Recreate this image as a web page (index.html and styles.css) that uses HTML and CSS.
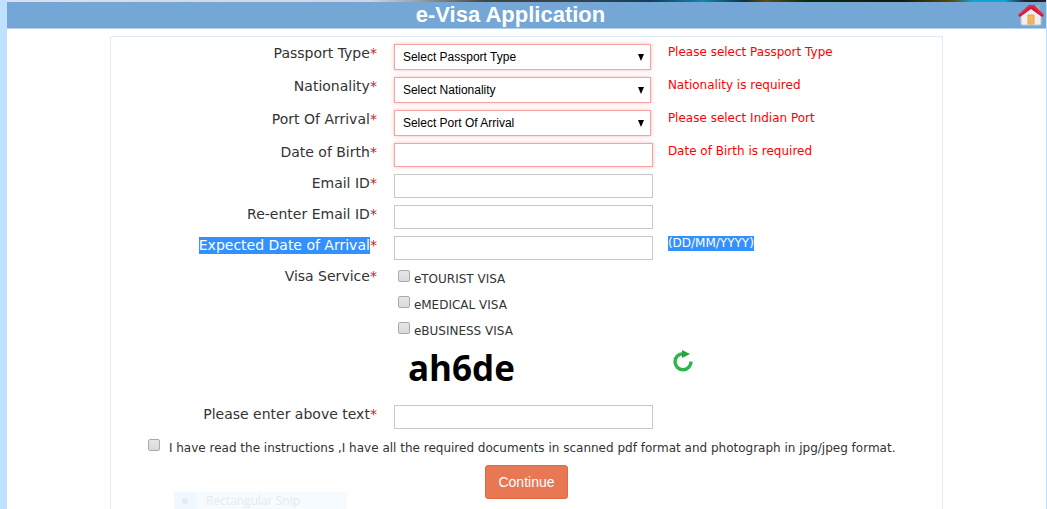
FILE: index.html
```html
<!DOCTYPE html>
<html lang="en">
<head>
<meta charset="utf-8">
<title>e-Visa Application</title>
<link rel="stylesheet" href="styles.css">
</head>
<body>
<div class="page">
  <div class="banner"></div>
  <header class="titlebar">
    <h1>e-Visa Application</h1>
    <a class="home" href="#" aria-label="Home">
      <svg width="26" height="22" viewBox="0 0 26 22">
        <path d="M18 1h4v7l-4-3z" fill="#aaa8b4"/>
        <path d="M3 10L13 3l10 7v10q0 1-1 1H4q-1 0-1-1z" fill="#f0eef0" stroke="#c9c4c6"/>
        <path d="M10 11h6v9h-6z" fill="#f2b75c" stroke="#e5a54e"/>
        <path d="M0 11L11 1h5l10 10-2 2-11-8-11 8z" fill="#d5173b"/>
        <path d="M2 10L12 2h3l8 8" fill="none" stroke="#e8405c"/>
      </svg>
    </a>
  </header>
  <form class="panel">
    <div class="row">
      <label for="ptype">Passport Type<b>*</b></label>
      <select id="ptype" class="invalid"><option>Select Passport Type</option></select>
      <span class="error">Please select Passport Type</span>
    </div>
    <div class="row">
      <label for="nation">Nationality<b>*</b></label>
      <select id="nation" class="invalid"><option>Select Nationality</option></select>
      <span class="error">Nationality is required</span>
    </div>
    <div class="row">
      <label for="port">Port Of Arrival<b>*</b></label>
      <select id="port" class="invalid"><option>Select Port Of Arrival</option></select>
      <span class="error">Please select Indian Port</span>
    </div>
    <div class="row">
      <label for="dob">Date of Birth<b>*</b></label>
      <input type="text" id="dob" class="invalid">
      <span class="error">Date of Birth is required</span>
    </div>
    <div class="row">
      <label for="email">Email ID<b>*</b></label>
      <input type="text" id="email">
    </div>
    <div class="row">
      <label for="email2">Re-enter Email ID<b>*</b></label>
      <input type="text" id="email2">
    </div>
    <div class="row">
      <label for="arrival"><span class="selected">Expected Date of Arrival</span><b>*</b></label>
      <input type="text" id="arrival">
      <span class="hint"><span class="selected">(DD/MM/YYYY)</span></span>
    </div>
    <div class="row" role="group" aria-labelledby="service">
      <span class="label" id="service">Visa Service<b>*</b></span>
      <div class="options">
        <label><input type="checkbox"><span>eTOURIST VISA</span></label>
        <label><input type="checkbox"><span>eMEDICAL VISA</span></label>
        <label><input type="checkbox"><span>eBUSINESS VISA</span></label>
      </div>
    </div>
    <div class="row captcha-row">
      <span></span>
      <span class="captcha">ah6de</span>
      <button type="button" class="refresh" aria-label="Refresh">
        <svg width="22" height="24" viewBox="0 0 22 24">
          <path d="M10 4.700A8 8 0 1 0 18 12.500" fill="none" stroke="#2fb34c" stroke-width="3.400"/>
          <path d="M9 1l8 4-8 4z" fill="#22a53d"/>
        </svg>
      </button>
    </div>
    <div class="row">
      <label for="code">Please enter above text<b>*</b></label>
      <input type="text" id="code">
    </div>
    <label class="consent"><input type="checkbox"><span>I have read the instructions ,I have all the required documents in scanned pdf format and photograph in jpg/jpeg format.</span></label>
    <button type="submit" class="continue">Continue</button>
  </form>
  <div class="snip"><i></i><span>Rectangular Snip</span></div>
</div>
</body>
</html>
```
FILE: styles.css
```css
* { box-sizing: border-box; }
body {
  margin: 0;
  background: #c0e0ff;
  color: #333;
  font: 14px/17px "DejaVu Sans", Verdana, sans-serif;
}
.page {
  position: relative;
  height: 100vh;
  margin: 0 1px 0 7px;
  background: #fff;
  overflow: hidden;
}
.banner {
  height: 2px;
  background: linear-gradient(90deg, #d9e0ee 0, #ccd6e8 35%, #999 40%, #444 46%, #34454f 55%, #123e5a 62%, #1585ac 67%, #103038 71%, #5c4c18 73%, #0b2a10 77%, #15180c 86%, #5a4a12 91%, #10a5d8 93%, #10a5d8 96%, #222 98%);
}
.titlebar {
  display: grid;
  grid-template-columns: 1fr 32px;
  align-items: center;
  height: 27px;
  background: #74a6d6;
  border-bottom: 1px solid #b5d3ef;
}
.titlebar h1 {
  margin: 0;
  color: #fff;
  font: bold 22px/26px "Liberation Sans", Arial, sans-serif;
  text-align: center;
}
.home { justify-self: end; display: flex; padding-right: 2px; }
.home svg { display: block; }
.panel {
  width: calc(80% + 2px);
  min-height: 560px;
  margin: 7px auto 0;
  padding: 7px 0;
  border: 1px solid #e0ebf8;
}
.row {
  display: grid;
  grid-template-columns: calc(32% + 2px) 259px 1fr;
  column-gap: 15px;
  align-items: start;
  margin-bottom: 7px;
}
.row > label, .label { padding: 1px 2px 0 0; text-align: right; }
b { color: #b52a2a; font-weight: normal; }
input[type="text"], select {
  width: 100%;
  height: 24px;
  margin: 0;
  border: 1px solid #c8c8c8;
  border-radius: 0;
  background: #fff;
}
select {
  appearance: none;
  width: 257px;
  height: 26px;
  padding: 0 8px;
  color: #000;
  background: url("data:image/svg+xml,%3Csvg xmlns='http://www.w3.org/2000/svg' width='6' height='7'%3E%3Cpath d='M0 0h6L3 7z'/%3E%3C/svg%3E") no-repeat right 6px center #fff;
  font: 12px "Liberation Sans", Arial, sans-serif;
}
input.invalid, select.invalid { border-color: #f3a5a5; box-shadow: 0 0 4px #fbb; }
.error, .hint { font-size: 12px; line-height: 15px; }
.error { padding-top: 1px; color: #f00; }
.selected { display: inline-block; background: #3390ff; color: #fff; }
.options { display: grid; gap: 8px; padding: 3px 0 0 4px; }
.options label { display: flex; gap: 4px; font-size: 12px; line-height: 18px; }
input[type="checkbox"] {
  appearance: none;
  flex: none;
  width: 12px;
  height: 12px;
  margin: 0;
  border: 1px solid #aaa;
  border-radius: 2px;
  background: linear-gradient(#e6e6e6, #dadada);
}
.captcha-row { height: 51px; }
.captcha {
  padding-left: 14px;
  color: #000;
  font: bold 35px/42px "Open Sans", sans-serif;
}
.refresh {
  display: flex;
  width: 32px;
  padding: 2px 4px 4px 5px;
  border: 0;
  background: none;
}
.consent {
  display: flex;
  gap: 9px;
  margin: 10px 0 0 37px;
  font-size: 12px;
  line-height: 18px;
  white-space: nowrap;
}
.continue {
  display: block;
  height: 34px;
  margin: 8px auto 0;
  padding: 0 12px;
  border: 1px solid #e1683f;
  border-radius: 3px;
  background: #e87753;
  color: #fff;
  font: 14px "Liberation Sans", Arial, sans-serif;
}
.snip {
  position: absolute;
  left: 167px;
  bottom: 0;
  display: flex;
  align-items: center;
  gap: 18px;
  width: 173px;
  height: 17px;
  background: linear-gradient(90deg, #eff7ff 22px, #f6fbff 22px);
  color: #e8eaec;
  font: 12px/17px "Open Sans", sans-serif;
}
.snip i { width: 6px; height: 6px; margin-left: 8px; border-radius: 50%; background: #e9e9ee; }
```
